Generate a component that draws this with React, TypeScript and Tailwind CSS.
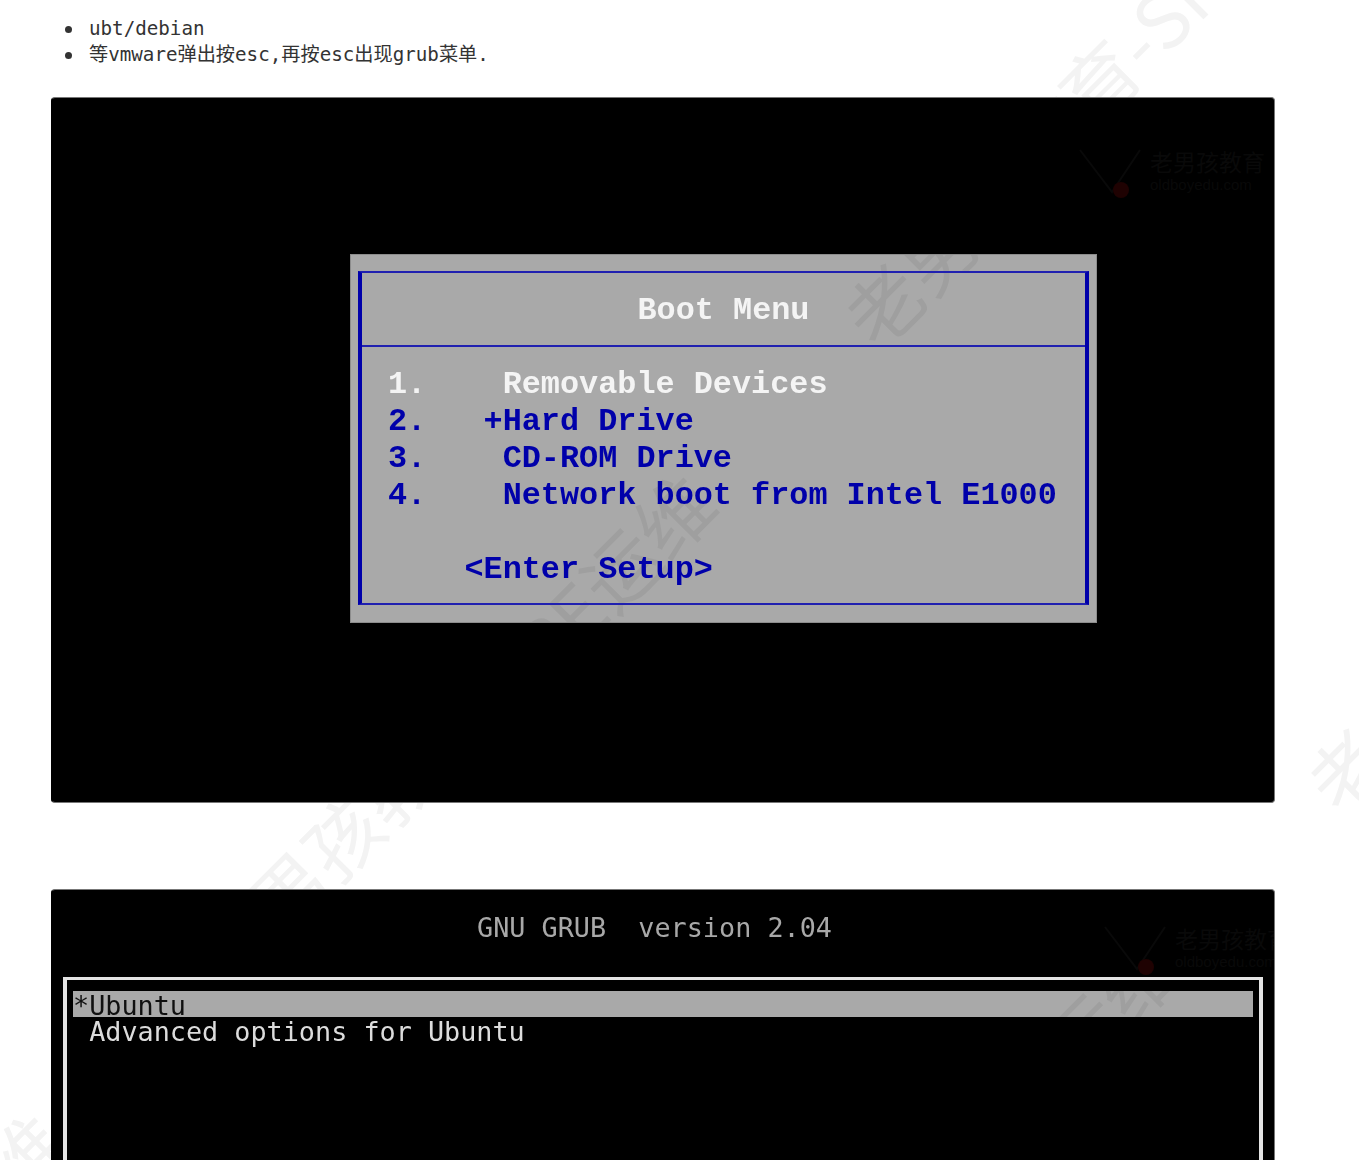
import React from 'react';

const GAP = '             ';
const WATERMARK = `老男孩教育-SRE运维${GAP}老男孩教育-SRE运维${GAP}老男孩教育-SRE运维`;

const NOTES = ['ubt/debian', '等vmware弹出按esc,再按esc出现grub菜单.'];

const BOOT_ROWS = [
  { text: '1.    Removable Devices', color: 'text-[#f4f4f4]' },
  { text: '2.   +Hard Drive', color: 'text-[#0000aa]' },
  { text: '3.    CD-ROM Drive', color: 'text-[#0000aa]' },
  { text: '4.    Network boot from Intel E1000', color: 'text-[#0000aa]' },
];

function Logo({ className }: { className: string }) {
  return (
    <div className={`absolute flex items-start ${className}`}>
      <svg width="72" height="52" viewBox="0 0 72 52" fill="none">
        <path d="M2 2 L34 44 L62 2" stroke="#090909" strokeWidth="2" />
        <circle cx="43" cy="42" r="8" fill="#1f0202" />
      </svg>
      <div className="whitespace-nowrap text-[#090909] font-['Noto_Sans_CJK_SC',sans-serif]">
        <div className="text-[23px] leading-[26px]">老男孩教育</div>
        <div className="text-[15px] leading-[22px] font-['Liberation_Sans',sans-serif]">oldboyedu.com</div>
      </div>
    </div>
  );
}

function Watermark({ className }: { className: string }) {
  return (
    <div
      className={`absolute origin-left -rotate-[45deg] whitespace-pre text-[76px] leading-[80px] font-['Noto_Sans_CJK_SC',sans-serif] pointer-events-none select-none ${className}`}
    >
      {WATERMARK}
    </div>
  );
}

export default function App() {
  return (
    <div className="relative h-[1160px] overflow-hidden bg-white font-['DejaVu_Sans_Mono','Noto_Sans_CJK_SC',monospace]">
      {/* watermark sits behind the screenshots */}
      <Watermark className="left-[-443px] top-[1579px] text-[#f3f3f3]" />
      <Watermark className="left-[669px] top-[1404px] text-[#f3f3f3]" />

      <ul className="relative pl-[65px] pt-[16px] text-[19.2px] leading-[26px] text-[#333]">
        {NOTES.map((note) => (
          <li key={note} className="flex items-center">
            <span className="mr-[17px] h-[7px] w-[7px] rounded-full bg-[#333]" />
            {note}
          </li>
        ))}
      </ul>

      <div className="relative ml-[51px] mt-[29px] h-[706px] w-[1224px] overflow-hidden rounded-[4px] border border-[#777] border-l-black bg-black pl-[298px] pt-[156px]">
        <Logo className="left-[1026px] top-[50px]" />

        <div className="relative h-[369px] w-[747px] overflow-hidden border border-[#8c8c8c] bg-[#a9a9a9] pl-[7px] pt-[16px] font-['Liberation_Mono',monospace] text-[31.85px] leading-[37px] blur-[0.4px]">
          <Watermark className="left-[-145px] top-[684px] text-[#0000000f]" />
          <div className="relative h-[334px] w-[731px] border-x-4 border-y-2 border-x-[#0000aa] border-y-[#2020b0]">
            <div className="flex h-[72px] items-center justify-center pt-[2px] font-bold text-[#f4f4f4]">Boot Menu</div>
            <div className="h-[2px] bg-[#2020b0]" />
            <div className="pl-[26px] pt-[19px] font-bold">
              {BOOT_ROWS.map((row) => (
                <div key={row.text} className={`whitespace-pre ${row.color}`}>
                  {row.text}
                </div>
              ))}
              <div className="mt-[37px] whitespace-pre text-[#0000aa]">{'    <Enter Setup>'}</div>
            </div>
          </div>
        </div>
      </div>

      <div className="relative ml-[51px] mt-[86px] h-[420px] w-[1224px] overflow-hidden rounded-[4px] border border-[#777] border-l-black bg-black pl-[11px] pt-[25px] text-[26.8px] leading-[26px] text-[#a8a8a8]">
        <Logo className="left-[1051px] top-[35px]" />
        <div className="relative whitespace-pre pl-[414px] blur-[0.4px]">GNU GRUB  version 2.04</div>

        <div className="relative mt-[36px] h-[300px] w-[1200px] border-x-4 border-y-[3px] border-[#e4e4e4] px-[6px] pt-[11px]">
          <div className="relative h-[26px] overflow-hidden whitespace-pre bg-[#a9a9a9] leading-[30px] text-[#101010]">
            <span className="blur-[0.4px]">*Ubuntu</span>
            <Watermark className="left-[596px] top-[413px] text-[#0000000f]" />
          </div>
          <div className="whitespace-pre pt-[1px] leading-[28px] text-[#dcdcdc] blur-[0.4px]"> Advanced options for Ubuntu</div>
        </div>
      </div>
    </div>
  );
}
